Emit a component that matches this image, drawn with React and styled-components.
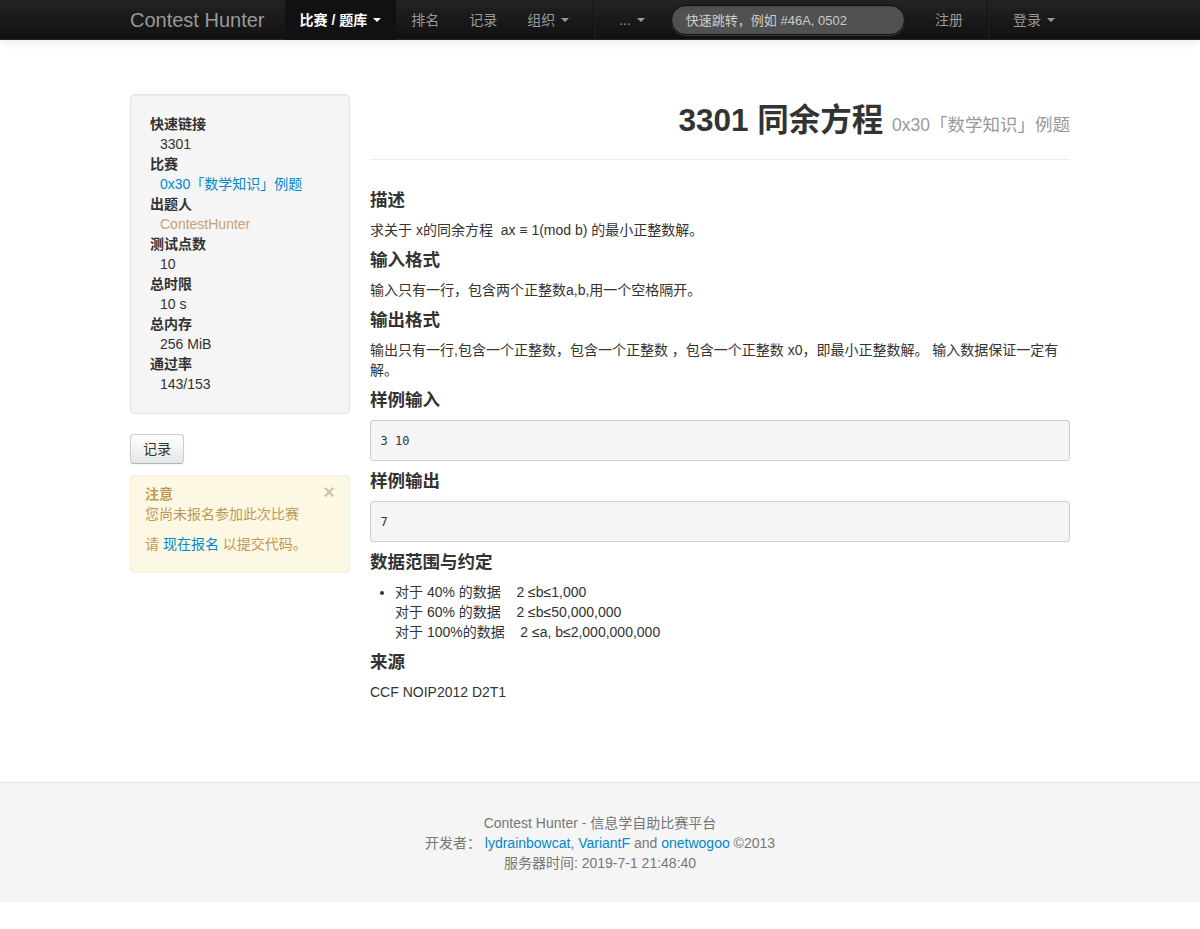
import React from 'react';
import styled, { createGlobalStyle } from 'styled-components';

const GlobalStyle = createGlobalStyle`
  html, body {
    margin: 0;
    padding: 0;
    background: #fff;
  }
  body {
    font-family: "Liberation Sans", Arial, "Noto Sans CJK SC", sans-serif;
    font-size: 14px;
    line-height: 20px;
    color: #333;
  }
  a {
    color: #0088cc;
    text-decoration: none;
  }
`;

const NavBar = styled.div`
  height: 40px;
  background-image: linear-gradient(to bottom, #222222, #111111);
  border-bottom: 1px solid #252525;
  box-sizing: border-box;
  box-shadow: 0 1px 10px rgba(0, 0, 0, 0.1);
`;

const NavInner = styled.div`
  width: 940px;
  margin: 0 auto;
  height: 40px;
  display: flex;
  align-items: stretch;
`;

const Brand = styled.a`
  display: block;
  padding: 10px 20px 10px 0;
  font-size: 20px;
  line-height: 20px;
  && {
    color: #999;
  }
`;

const NavItem = styled.a`
  display: flex;
  align-items: flex-start;
  padding: 10px 15px;
  line-height: 20px;
  height: 40px;
  box-sizing: border-box;
  white-space: nowrap;
  && {
    color: ${(p) => (p.$active ? '#fff' : '#999')};
  }
  background: ${(p) => (p.$active ? '#111' : 'transparent')};
  font-weight: ${(p) => (p.$active ? 'bold' : 'normal')};
`;

const Caret = styled.b`
  display: inline-block;
  width: 0;
  height: 0;
  margin: 8px 0 0 6px;
  border-top: 4px solid ${(p) => (p.$light ? '#fff' : '#999')};
  border-left: 4px solid transparent;
  border-right: 4px solid transparent;
`;

const Divider = styled.div`
  width: 0;
  height: 40px;
  margin: 0 9px;
  border-left: 1px solid #111;
  border-right: 1px solid #222;
`;

const SearchInput = styled.input`
  margin: 5px 0 0 11px;
  width: 234px;
  height: 30px;
  box-sizing: border-box;
  padding: 4px 14px;
  border-radius: 15px;
  border: 1px solid #111;
  background: #515151;
  color: #fff;
  font-family: inherit;
  font-size: 13px;
  box-shadow: inset 0 1px 2px rgba(0, 0, 0, 0.1), 0 1px 0 rgba(255, 255, 255, 0.15);
  outline: none;
  &::placeholder {
    color: #ccc;
  }
`;

const RightNav = styled.div`
  margin-left: auto;
  display: flex;
  align-items: stretch;
`;

const Container = styled.div`
  width: 940px;
  margin: 0 auto;
  padding-top: 54px;
  display: flex;
  gap: 20px;
  align-items: flex-start;
`;

const Sidebar = styled.div`
  width: 220px;
  flex: none;
`;

const Well = styled.div`
  box-sizing: border-box;
  padding: 19px;
  background: #f5f5f5;
  border: 1px solid #e3e3e3;
  border-radius: 4px;
  box-shadow: inset 0 1px 1px rgba(0, 0, 0, 0.05);
  margin-bottom: 20px;
`;

const InfoList = styled.dl`
  margin: 0;
  dt {
    font-weight: bold;
    line-height: 20px;
  }
  dd {
    margin: 0 0 0 10px;
    line-height: 20px;
  }
`;

const Warn = styled.span`
  color: #c9a16f;
`;

const Button = styled.button`
  display: block;
  padding: 4px 12px;
  height: 30px;
  font-family: inherit;
  font-size: 14px;
  line-height: 20px;
  color: #333;
  background-image: linear-gradient(to bottom, #ffffff, #e6e6e6);
  border: 1px solid #cccccc;
  border-bottom-color: #b3b3b3;
  border-radius: 4px;
  box-shadow: inset 0 1px 0 rgba(255, 255, 255, 0.2), 0 1px 2px rgba(0, 0, 0, 0.05);
  margin-bottom: 11px;
`;

const Alert = styled.div`
  position: relative;
  padding: 8px 35px 8px 14px;
  background: #fcf8e3;
  border: 1px solid #fbeed5;
  border-radius: 4px;
  color: #c09853;
  p {
    margin: 0 0 10px;
  }
`;

const Close = styled.span`
  position: absolute;
  top: 6px;
  right: 14px;
  font-size: 20px;
  font-weight: bold;
  line-height: 20px;
  color: #000;
  opacity: 0.2;
`;

const Main = styled.div`
  width: 700px;
  flex: none;
`;

const PageHeader = styled.div`
  margin: 6px 0 30px;
  padding-bottom: 19px;
  border-bottom: 1px solid #eee;
`;

const Title = styled.h2`
  margin: 0;
  text-align: right;
  font-size: 31.5px;
  line-height: 40px;
  font-weight: bold;
  color: #333;
  small {
    font-size: 17.5px;
    line-height: 1;
    font-weight: normal;
    color: #999;
  }
`;

const SectionTitle = styled.h4`
  margin: 10px 0;
  font-size: 17.5px;
  line-height: 20px;
  font-weight: bold;
`;

const Para = styled.p`
  margin: 0 0 10px;
`;

const Pre = styled.pre`
  margin: 0 0 10px;
  padding: 9.5px;
  background: #f5f5f5;
  border: 1px solid rgba(0, 0, 0, 0.15);
  border-radius: 4px;
  font-family: "DejaVu Sans Mono", "Liberation Mono", monospace;
  font-size: 12px;
  line-height: 20px;
  color: #333;
`;

const List = styled.ul`
  margin: 0 0 10px 25px;
  padding: 0;
`;

const Footer = styled.div`
  margin-top: 70px;
  padding: 30px 0 29px;
  background: #f5f5f5;
  border-top: 1px solid #e5e5e5;
  text-align: center;
  color: #777;
`;

const sp = (n) => '\u00a0'.repeat(n);

export default function App() {
  return (
    <>
      <GlobalStyle />
      <NavBar>
        <NavInner>
          <Brand href="#">Contest Hunter</Brand>
          <NavItem $active href="#">
            比赛 / 题库<Caret $light />
          </NavItem>
          <NavItem href="#">排名</NavItem>
          <NavItem href="#">记录</NavItem>
          <NavItem href="#">
            组织<Caret />
          </NavItem>
          <Divider />
          <NavItem href="#">
            ...<Caret />
          </NavItem>
          <SearchInput placeholder="快速跳转，例如 #46A, 0502" />
          <RightNav>
            <NavItem href="#">注册</NavItem>
            <Divider />
            <NavItem href="#">
              登录<Caret />
            </NavItem>
          </RightNav>
        </NavInner>
      </NavBar>

      <Container>
        <Sidebar>
          <Well>
            <InfoList>
              <dt>快速链接</dt>
              <dd>3301</dd>
              <dt>比赛</dt>
              <dd>
                <a href="#">0x30「数学知识」例题</a>
              </dd>
              <dt>出题人</dt>
              <dd>
                <Warn>ContestHunter</Warn>
              </dd>
              <dt>测试点数</dt>
              <dd>10</dd>
              <dt>总时限</dt>
              <dd>10 s</dd>
              <dt>总内存</dt>
              <dd>256 MiB</dd>
              <dt>通过率</dt>
              <dd>143/153</dd>
            </InfoList>
          </Well>
          <Button>记录</Button>
          <Alert>
            <Close>×</Close>
            <strong>注意</strong>
            <p>您尚未报名参加此次比赛</p>
            <p>
              请 <a href="#">现在报名</a> 以提交代码。
            </p>
          </Alert>
        </Sidebar>

        <Main>
          <PageHeader>
            <Title>
              3301 同余方程 <small>0x30「数学知识」例题</small>
            </Title>
          </PageHeader>

          <SectionTitle>描述</SectionTitle>
          <Para>求关于 x的同余方程 {sp(1)}ax ≡ 1(mod b) 的最小正整数解。</Para>

          <SectionTitle>输入格式</SectionTitle>
          <Para>输入只有一行，包含两个正整数a,b,用一个空格隔开。</Para>

          <SectionTitle>输出格式</SectionTitle>
          <Para>
            输出只有一行,包含一个正整数，包含一个正整数 ，包含一个正整数 x0，即最小正整数解。 输入数据保证一定有解。
          </Para>

          <SectionTitle>样例输入</SectionTitle>
          <Pre>3 10</Pre>

          <SectionTitle>样例输出</SectionTitle>
          <Pre>7</Pre>

          <SectionTitle>数据范围与约定</SectionTitle>
          <List>
            <li>
              对于 40% 的数据{sp(4)}2 ≤b≤1,000
              <br />
              对于 60% 的数据{sp(4)}2 ≤b≤50,000,000
              <br />
              对于 100%的数据{sp(4)}2 ≤a, b≤2,000,000,000
            </li>
          </List>

          <SectionTitle>来源</SectionTitle>
          <Para>CCF NOIP2012 D2T1</Para>
        </Main>
      </Container>

      <Footer>
        <div>Contest Hunter - 信息学自助比赛平台</div>
        <div>
          开发者： <a href="#">lydrainbowcat</a>, <a href="#">VariantF</a> and{' '}
          <a href="#">onetwogoo</a> ©2013
        </div>
        <div>服务器时间: 2019-7-1 21:48:40</div>
      </Footer>
    </>
  );
}
